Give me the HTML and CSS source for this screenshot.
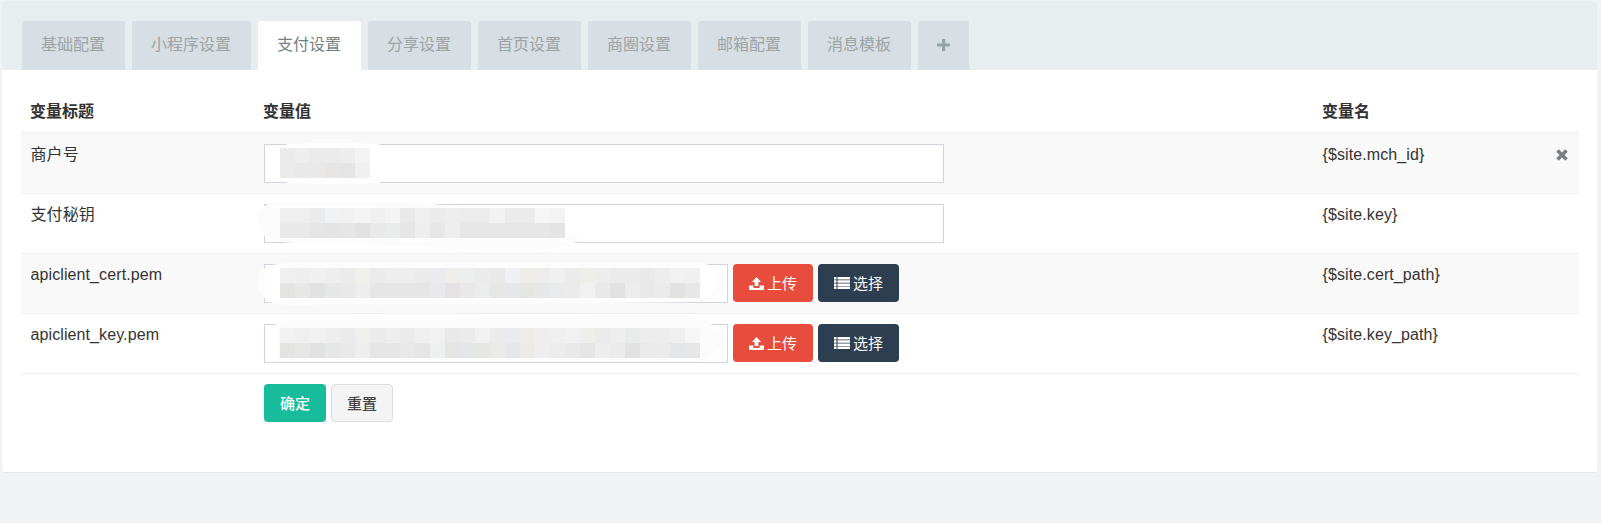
FILE: index.html
```html
<!DOCTYPE html>
<html lang="zh-CN">
<head>
<meta charset="utf-8">
<title>支付设置</title>
<link rel="stylesheet" href="styles.css">
</head>
<body>
<div class="panel">
  <div class="tabs">
    <a class="tab">基础配置</a>
    <a class="tab">小程序设置</a>
    <a class="tab active">支付设置</a>
    <a class="tab">分享设置</a>
    <a class="tab">首页设置</a>
    <a class="tab">商圈设置</a>
    <a class="tab">邮箱配置</a>
    <a class="tab">消息模板</a>
    <a class="tab tab-add"><svg class="icon-plus" viewBox="0 0 13 12"><path d="M5 0h3.200v4.400H13v3.200H8.200V12H5V7.600H0V4.400h5z"/></svg></a>
  </div>
  <div class="body">
    <table class="config">
      <thead>
        <tr><th class="c-title">变量标题</th><th class="c-value">变量值</th><th class="c-name">变量名</th><th class="c-act"></th></tr>
      </thead>
      <tbody>
        <tr class="odd">
          <td class="cell-text">商户号</td>
          <td>
            <div class="field wide">
              <input class="input" type="text">
              <svg class="smear s1" viewBox="0 0 130 50"><path class="w" d="M23 0C50-1 90-1 115 0C122 8 122 31 115 39C90 40 50 40 23 39C18 30 18 8 23 0Z"/></svg>
              <svg class="mosaic m1" viewBox="0 0 90 30">
                <g><rect x="0" fill="#ebebeb"/><rect x="15" fill="#eeeeee"/><rect x="30" fill="#ebebeb"/><rect x="45" fill="#ebebeb"/><rect x="60" fill="#ededed"/><rect x="75" fill="#f3f3f3"/></g>
                <g transform="translate(0 15)"><rect x="0" fill="#ebebeb"/><rect x="15" fill="#e9e9e9"/><rect x="30" fill="#e9e9e9"/><rect x="45" fill="#e7e6e4"/><rect x="60" fill="#e5e5e5"/><rect x="75" fill="#f0f0f0"/></g>
              </svg>
            </div>
          </td>
          <td class="cell-text">{$site.mch_id}</td>
          <td class="c-act"><svg class="icon-x" viewBox="0 0 14 12"><path d="M2.500 1.500 11.500 10.500M11.500 1.500 2.500 10.500"/></svg></td>
        </tr>
        <tr>
          <td class="cell-text">支付秘钥</td>
          <td>
            <div class="field wide">
              <input class="input" type="text">
              <svg class="smear s2" viewBox="0 0 330 50"><path class="f" d="M-7 18C-8 4 4-3 20-2C70-2 110-2 170 0L250 10L316 34C310 46 260 49 210 46C150 42 100 39 30 39C8 38-7 32-7 18Z"/></svg>
              <svg class="mosaic m2" viewBox="0 0 285 30">
                <g><rect x="0" fill="#efefef"/><rect x="15" fill="#efefef"/><rect x="30" fill="#ebebeb"/><rect x="45" fill="#f1f2f4"/><rect x="60" fill="#f1f1f1"/><rect x="75" fill="#f4f4f4"/><rect x="90" fill="#f0f0f0"/><rect x="105" fill="#f4f4f4"/><rect x="120" fill="#e9e9e9"/><rect x="135" fill="#efefef"/><rect x="150" fill="#ebebeb"/><rect x="165" fill="#eeeeee"/><rect x="180" fill="#ececec"/><rect x="195" fill="#ececec"/><rect x="210" fill="#f2f2f2"/><rect x="225" fill="#ebebeb"/><rect x="240" fill="#ebebeb"/><rect x="255" fill="#f6f6f6"/><rect x="270" fill="#f3f3f3"/></g>
                <g transform="translate(0 15)"><rect x="0" fill="#e9e9e9"/><rect x="15" fill="#e9e9e9"/><rect x="30" fill="#e5e5e5"/><rect x="45" fill="#e4e4e4"/><rect x="60" fill="#e6e6e6"/><rect x="75" fill="#e2e2e2"/><rect x="90" fill="#e9e9e9"/><rect x="105" fill="#eaeceb"/><rect x="120" fill="#e6e6e6"/><rect x="135" fill="#eeeeee"/><rect x="150" fill="#e7e7e7"/><rect x="165" fill="#eeeeee"/><rect x="180" fill="#e7e7e7"/><rect x="195" fill="#e7e7e7"/><rect x="210" fill="#e7e7e7"/><rect x="225" fill="#e7e7e7"/><rect x="240" fill="#e7e7e7"/><rect x="255" fill="#e7e7e7"/><rect x="270" fill="#e4e4e4"/></g>
              </svg>
            </div>
          </td>
          <td class="cell-text">{$site.key}</td>
          <td class="c-act"></td>
        </tr>
        <tr class="odd">
          <td class="cell-text">apiclient_cert.pem</td>
          <td>
            <div class="upload">
              <div class="field narrow">
                <input class="input" type="text">
                <svg class="smear s3" viewBox="0 0 480 50"><path class="f" d="M-7 18C-7 6 4-2 30-1C150-1 340-1 440-1C452 4 458 10 458 18C458 28 452 36 440 38C340 39 150 41 20 41C2 40-7 30-7 18Z"/><path class="w" d="M1 4H20V34H1ZM430 4H451V34H430Z"/></svg>
                <svg class="mosaic m3" viewBox="0 0 420 30">
                  <g><rect x="0" fill="#efefef"/><rect x="15" fill="#eeeeee"/><rect x="30" fill="#f0f0f0"/><rect x="45" fill="#eeeeee"/><rect x="60" fill="#ebebeb"/><rect x="75" fill="#efefec"/><rect x="90" fill="#ebebeb"/><rect x="105" fill="#eeeeee"/><rect x="120" fill="#eeeeee"/><rect x="135" fill="#ebebeb"/><rect x="150" fill="#e9ebee"/><rect x="165" fill="#efeeeb"/><rect x="180" fill="#edefee"/><rect x="195" fill="#ebebeb"/><rect x="210" fill="#e9e9e9"/><rect x="225" fill="#eff0f3"/><rect x="240" fill="#edece9"/><rect x="255" fill="#ececec"/><rect x="270" fill="#eef0ef"/><rect x="285" fill="#ebebeb"/><rect x="300" fill="#eeeeea"/><rect x="315" fill="#ededed"/><rect x="330" fill="#ebebeb"/><rect x="345" fill="#ebebeb"/><rect x="360" fill="#e9e9e9"/><rect x="375" fill="#ededed"/><rect x="390" fill="#f1f1f1"/><rect x="405" fill="#f0f0f0"/></g>
                  <g transform="translate(0 15)"><rect x="0" fill="#e3e3e1"/><rect x="15" fill="#e7e7e7"/><rect x="30" fill="#e2e2e2"/><rect x="45" fill="#e6e8e7"/><rect x="60" fill="#e9e9e9"/><rect x="75" fill="#eeeeee"/><rect x="90" fill="#e6e6e6"/><rect x="105" fill="#e6e6e6"/><rect x="120" fill="#e6e6e6"/><rect x="135" fill="#e6e6e6"/><rect x="150" fill="#e7e9eb"/><rect x="165" fill="#e4e2e2"/><rect x="180" fill="#e9e9e9"/><rect x="195" fill="#ebedec"/><rect x="210" fill="#e7e7e5"/><rect x="225" fill="#e6e7ea"/><rect x="240" fill="#e5e5e1"/><rect x="255" fill="#e7e7e7"/><rect x="270" fill="#e8eaec"/><rect x="285" fill="#ebebeb"/><rect x="300" fill="#f1f1f1"/><rect x="315" fill="#e9e9e9"/><rect x="330" fill="#e2e2e2"/><rect x="345" fill="#ececec"/><rect x="360" fill="#e9e9e9"/><rect x="375" fill="#ebebeb"/><rect x="390" fill="#e2e2e2"/><rect x="405" fill="#e7e7e7"/></g>
                </svg>
              </div>
              <button class="btn btn-red" type="button"><svg class="icon-up" viewBox="0 0 15 13"><path d="M7.500 0 12 5H9.400v4H5.600V5H3zM0 8.500h4.300v1.700c0 .5.400.8.800.8h4.800c.4 0 .8-.3.800-.8V8.500H15V13H0z"/></svg>上传</button>
              <button class="btn btn-dark" type="button"><svg class="icon-list" viewBox="0 0 16 12"><path d="M0 0h2.500v2.500H0zM3.500 0H16v2.500H3.500zM0 3.200h2.500v2.500H0zM3.500 3.200H16v2.500H3.500zM0 6.400h2.500v2.500H0zM3.500 6.400H16v2.500H3.500zM0 9.500h2.500V12H0zM3.500 9.500H16V12H3.500z"/></svg>选择</button>
            </div>
          </td>
          <td class="cell-text">{$site.cert_path}</td>
          <td class="c-act"></td>
        </tr>
        <tr>
          <td class="cell-text">apiclient_key.pem</td>
          <td>
            <div class="upload">
              <div class="field narrow">
                <input class="input" type="text">
                <svg class="smear s3" viewBox="0 0 480 50"><path class="f" d="M12-3C120-6 330-8 420-8C445-8 458 8 458 16C458 24 448 36 430 38C340 38 150 38 15 38L12 0Z"/></svg>
                <svg class="mosaic m3" viewBox="0 0 420 30">
                  <g><rect x="0" fill="#f1f1f1"/><rect x="15" fill="#efefef"/><rect x="30" fill="#f1f1f1"/><rect x="45" fill="#eeeeee"/><rect x="60" fill="#ebebeb"/><rect x="75" fill="#efefec"/><rect x="90" fill="#ebebeb"/><rect x="105" fill="#eeeeee"/><rect x="120" fill="#ebebeb"/><rect x="135" fill="#efefef"/><rect x="150" fill="#f1f1f1"/><rect x="165" fill="#e8e8e8"/><rect x="180" fill="#ebebeb"/><rect x="195" fill="#f1f1f1"/><rect x="210" fill="#ebebeb"/><rect x="225" fill="#e8eaed"/><rect x="240" fill="#edece9"/><rect x="255" fill="#eeeeee"/><rect x="270" fill="#efefef"/><rect x="285" fill="#f1f1f1"/><rect x="300" fill="#eeeeea"/><rect x="315" fill="#ebebeb"/><rect x="330" fill="#eeeeee"/><rect x="345" fill="#e9ebea"/><rect x="360" fill="#ededed"/><rect x="375" fill="#ededed"/><rect x="390" fill="#efefef"/><rect x="405" fill="#f6f6f6"/></g>
                  <g transform="translate(0 15)"><rect x="0" fill="#e3e3e1"/><rect x="15" fill="#e7e7e7"/><rect x="30" fill="#e2e2e2"/><rect x="45" fill="#e6e8e7"/><rect x="60" fill="#e9e9e9"/><rect x="75" fill="#eeeeee"/><rect x="90" fill="#e6e6e6"/><rect x="105" fill="#e6e6e6"/><rect x="120" fill="#e9e9e9"/><rect x="135" fill="#e6e6e6"/><rect x="150" fill="#eeefef"/><rect x="165" fill="#e5e5e3"/><rect x="180" fill="#e5e6e9"/><rect x="195" fill="#e6e6e4"/><rect x="210" fill="#eaeae8"/><rect x="225" fill="#e6e7ea"/><rect x="240" fill="#ebeae7"/><rect x="255" fill="#eeeef0"/><rect x="270" fill="#ebedec"/><rect x="285" fill="#e9e9e9"/><rect x="300" fill="#e5e5e5"/><rect x="315" fill="#ededed"/><rect x="330" fill="#ebebeb"/><rect x="345" fill="#e2e2e2"/><rect x="360" fill="#eaeaea"/><rect x="375" fill="#ebebeb"/><rect x="390" fill="#e5e6e9"/><rect x="405" fill="#e7e7e5"/></g>
                </svg>
              </div>
              <button class="btn btn-red" type="button"><svg class="icon-up" viewBox="0 0 15 13"><path d="M7.500 0 12 5H9.400v4H5.600V5H3zM0 8.500h4.300v1.700c0 .5.400.8.800.8h4.800c.4 0 .8-.3.800-.8V8.500H15V13H0z"/></svg>上传</button>
              <button class="btn btn-dark" type="button"><svg class="icon-list" viewBox="0 0 16 12"><path d="M0 0h2.500v2.500H0zM3.500 0H16v2.500H3.500zM0 3.200h2.500v2.500H0zM3.500 3.200H16v2.500H3.500zM0 6.400h2.500v2.500H0zM3.500 6.400H16v2.500H3.500zM0 9.500h2.500V12H0zM3.500 9.500H16V12H3.500z"/></svg>选择</button>
            </div>
          </td>
          <td class="cell-text">{$site.key_path}</td>
          <td class="c-act"></td>
        </tr>
        <tr class="foot">
          <td></td>
          <td>
            <div class="actions">
              <button class="btn btn-green" type="submit">确定</button>
              <button class="btn btn-reset" type="reset">重置</button>
            </div>
          </td>
          <td></td>
          <td></td>
        </tr>
      </tbody>
    </table>
  </div>
</div>
</body>
</html>
```

FILE: styles.css
```css
* { box-sizing: border-box; }

html, body { height: 100%; }

body {
  margin: 0;
  padding: 1px 4px 0 2px;
  background: #eff3f6;
  color: #333;
  font: 16px/23px "Liberation Sans", "Noto Sans CJK SC", sans-serif;
  overflow: hidden;
}

.panel {
  background: #fff;
  height: 472px;
  border-bottom: 1px solid #e4e7ea;
  border-radius: 3px;
  overflow: hidden;
}

.tabs {
  display: flex;
  gap: 7px;
  height: 69px;
  padding: 20px 0 0 20px;
  background: #e8edf0;
}

.tab {
  display: flex;
  align-items: center;
  justify-content: center;
  height: 49px;
  padding: 0 20px 2px 19px;
  background: #d7dee4;
  color: #9ca4a4;
  border-radius: 3px 3px 0 0;
}

.tab.active {
  background: #fff;
  color: #748284;
}

.tab-add {
  width: 51px;
  padding: 0 0 2px;
}

.icon-plus {
  width: 13px;
  height: 12px;
  fill: #95a3a5;
}

.body {
  padding: 0 18px 0 19px;
}

.config {
  width: 100%;
  border-collapse: separate;
  border-spacing: 0;
  table-layout: fixed;
}

.config th {
  height: 64px;
  padding: 0 10px 9px 9px;
  vertical-align: bottom;
  text-align: left;
  font-weight: 700;
  color: #333;
  border-bottom: 2px solid #f4f4f4;
}

.config td {
  height: 60px;
  padding: 10px;
  vertical-align: top;
  letter-spacing: .1px;
  border-bottom: 1px solid #f0f0f0;
}

.config td.cell-text {
  padding: 9px 10px 10px 9.500px;
}

.config tr.odd td { background: #f9f9f9; }

.config tr.foot td {
  border-bottom: 0;
}

.c-title { width: 233px; }
.c-name { width: 228px; }
.c-act { width: 38px; }

.config .c-act {
  padding: 15px 10px 0 0;
  text-align: right;
}

.field {
  position: relative;
  height: 39px;
}

.wide { width: 680px; }
.narrow { width: 464px; flex: none; }

.input {
  display: block;
  width: 100%;
  height: 39px;
  padding: 6px 12px;
  background: #fff;
  border: 1px solid #d0d4de;
  border-radius: 0;
  outline: 0;
}

.smear {
  position: absolute;
  left: 0;
  top: 0;
  overflow: visible;
  height: 50px;
  pointer-events: none;
}

.s1 { width: 130px; }
.s2 { width: 330px; }
.s3 { width: 480px; }

.smear .w { fill: #fff; }
.smear .f { fill: #fcfcfc; }

.mosaic {
  position: absolute;
  left: 16px;
  top: 4px;
  height: 30px;
  shape-rendering: crispEdges;
}

.m1 { width: 90px; }
.m2 { width: 285px; }
.m3 { width: 420px; }

.mosaic rect {
  width: 15px;
  height: 15px;
}

.upload,
.actions {
  display: flex;
  gap: 5px;
}

.btn {
  display: inline-flex;
  align-items: center;
  justify-content: center;
  gap: 3px;
  height: 38px;
  padding: 0;
  font: inherit;
  font-size: 15px;
  border: 0;
  border-radius: 4px;
  color: #fff;
}

.btn-red { width: 80px; background: #e74c3c; }
.btn-dark { width: 81px; background: #2c3e50; }
.btn-green { width: 62px; background: #18bc9c; font-weight: 500; }

.btn-reset {
  width: 62px;
  background: #f4f4f4;
  border: 1px solid #ddd;
  color: #444;
  font-weight: 500;
}

.icon-up {
  width: 15px;
  height: 13px;
  fill: #fff;
}

.icon-list {
  width: 16px;
  height: 12px;
  fill: #fff;
}

.icon-x {
  display: block;
  margin-left: auto;
  width: 14px;
  height: 12px;
  fill: none;
  stroke: #7b7e80;
  stroke-width: 3.6;
}
```
